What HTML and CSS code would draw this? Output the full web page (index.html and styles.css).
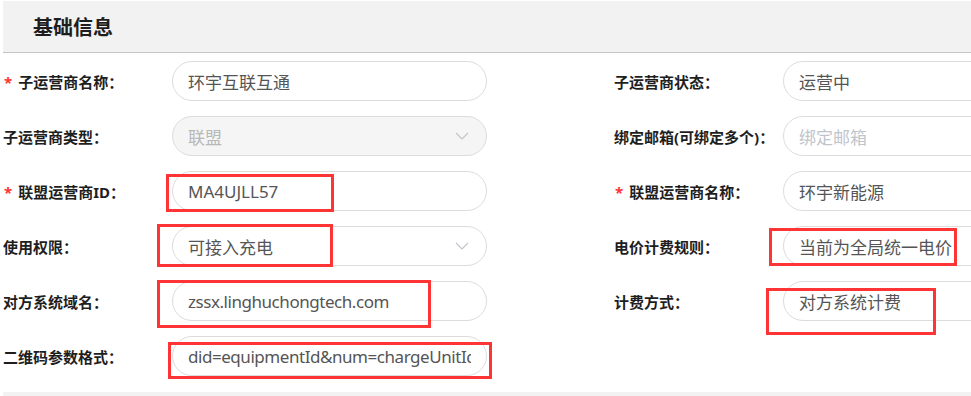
FILE: index.html
```html
<!DOCTYPE html>
<html lang="zh-CN">
<head>
    <meta charset="UTF-8">
    <title>基础信息</title>
    <link rel="stylesheet" href="styles.css">
</head>
<body>
<div class="page">
    <div class="section-head">
        <h2 class="section-title">基础信息</h2>
    </div>

    <div class="form-grid">
        <div class="field">
            <label class="field-label required">子运营商名称：</label>
            <div class="input"><span class="value">环宇互联互通</span></div>
        </div>
        <div class="field">
            <label class="field-label">子运营商状态：</label>
            <div class="input"><span class="value">运营中</span></div>
        </div>

        <div class="field">
            <label class="field-label">子运营商类型：</label>
            <div class="input select disabled"><span class="value">联盟</span>
                <svg class="chevron" viewBox="0 0 14 8" width="14" height="8"><path d="M1 1l6 6 6-6" fill="none" stroke="#c0c4cc" stroke-width="1.2"/></svg>
            </div>
        </div>
        <div class="field">
            <label class="field-label">绑定邮箱(可绑定多个)：</label>
            <div class="input placeholder"><span class="value">绑定邮箱</span></div>
        </div>

        <div class="field">
            <label class="field-label required">联盟运营商ID：</label>
            <div class="input"><span class="value">MA4UJLL57</span></div>
            <div class="mark mark-id"></div>
        </div>
        <div class="field">
            <label class="field-label required">联盟运营商名称：</label>
            <div class="input"><span class="value">环宇新能源</span></div>
        </div>

        <div class="field">
            <label class="field-label">使用权限：</label>
            <div class="input select"><span class="value">可接入充电</span>
                <svg class="chevron" viewBox="0 0 14 8" width="14" height="8"><path d="M1 1l6 6 6-6" fill="none" stroke="#c0c4cc" stroke-width="1.2"/></svg>
            </div>
            <div class="mark mark-perm"></div>
        </div>
        <div class="field">
            <label class="field-label">电价计费规则：</label>
            <div class="input"><span class="value">当前为全局统一电价</span></div>
            <div class="mark mark-rule"></div>
        </div>

        <div class="field">
            <label class="field-label">对方系统域名：</label>
            <div class="input"><span class="value latin">zssx.linghuchongtech.com</span></div>
            <div class="mark mark-domain"></div>
        </div>
        <div class="field">
            <label class="field-label">计费方式：</label>
            <div class="input"><span class="value">对方系统计费</span></div>
            <div class="mark mark-billing"></div>
        </div>

        <div class="field">
            <label class="field-label">二维码参数格式：</label>
            <div class="input"><span class="value latin">did=equipmentId&amp;num=chargeUnitId</span></div>
            <div class="mark mark-qr"></div>
        </div>
    </div>

    <div class="section-foot"></div>
</div>
</body>
</html>
```

FILE: styles.css
```css
body {
    margin: 0;
    background: #fff;
    font-family: 'Noto Sans', 'Noto Sans CJK SC', sans-serif;
    color: #1e1e1e;
    overflow: hidden;
}

.page {
    margin-left: 3px;
    padding-top: 1px;
    overflow: hidden;
}

.section-head {
    height: 51px;
    background-color: #f2f2f2;
    border-bottom: 1px solid #c4c4c4;
    display: flex;
    align-items: center;
    padding-left: 30px;
}

.section-title {
    margin: 0;
    font-size: 20px;
    font-weight: 700;
    color: #1e1e1e;
}

.form-grid {
    display: grid;
    grid-template-columns: 611px 611px;
    row-gap: 15px;
    padding-top: 8px;
}

.field {
    position: relative;
    display: flex;
    align-items: center;
    height: 40px;
}

.field-label {
    width: 169px;
    flex-shrink: 0;
    font-size: 15px;
    font-weight: 700;
    color: #1e1e1e;
    white-space: nowrap;
}

.field-label.required::before {
    content: '*';
    color: #f33;
    margin: 0 6px 0 1px;
}

.input {
    box-sizing: border-box;
    width: 315px;
    height: 40px;
    border: 1px solid #dcdcdc;
    border-radius: 20px;
    padding: 0 15px;
    display: flex;
    align-items: center;
    font-size: 17px;
    color: #555;
    position: relative;
}

.value {
    white-space: nowrap;
    overflow: hidden;
    min-width: 0;
}

.value.latin {
    letter-spacing: -0.45px;
}

.input.placeholder {
    color: #c0c4cc;
}

.input.disabled {
    background-color: #f5f5f5;
    color: #b8b8b8;
}

.input.select {
    padding-right: 36px;
}

.chevron {
    position: absolute;
    right: 17px;
    top: 15px;
}

.mark {
    position: absolute;
    box-sizing: border-box;
    border: 3px solid #ff3535;
    pointer-events: none;
}

.mark-id { left: 163px; top: 3px; width: 168px; height: 38px; }
.mark-perm { left: 154px; top: -2px; width: 176px; height: 43px; }
.mark-domain { left: 154px; top: -1px; width: 274px; height: 48px; }
.mark-qr { left: 165px; top: 6px; width: 324px; height: 37px; }
.mark-rule { left: 155px; top: 2px; width: 188px; height: 38px; }
.mark-billing { left: 152px; top: 7px; width: 170px; height: 47px; }

.section-foot {
    margin-top: 16px;
    height: 5px;
    background-color: #f2f2f2;
}
```
